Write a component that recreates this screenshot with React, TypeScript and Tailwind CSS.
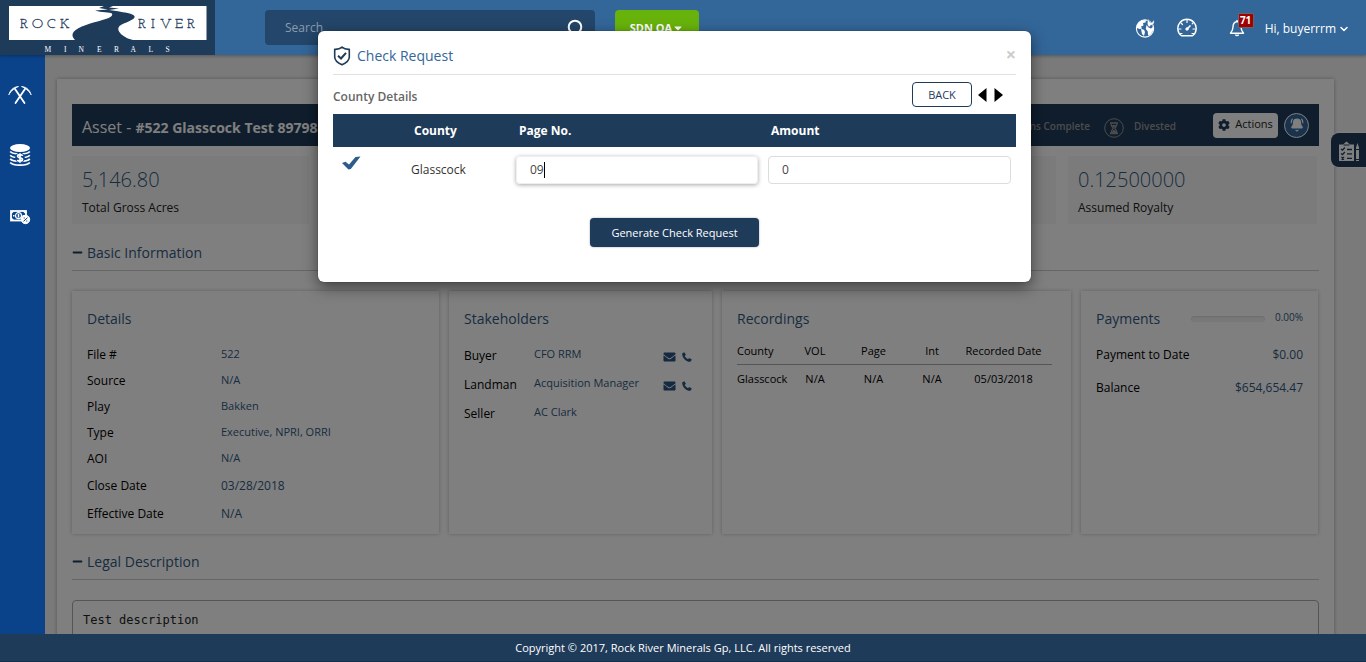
import { FaCaretDown, FaCog, FaEnvelope, FaMinus, FaPhoneAlt } from 'react-icons/fa';
import { BellRing, ChevronDown } from 'lucide-react';

function Logo() {
  return (
    <svg viewBox="0 0 215 55" className="h-[55px] w-[215px] shrink-0" role="img" aria-label="Rock River Minerals">
      <rect width="215" height="55" fill="#1f3b5a" />
      <rect x="9" y="6" width="197.500" height="34" fill="#fff" />
      <path d="M75 40C69 34 74 29 86 25C97 21 110 19 112 15.500C114 12 107 13 100 11.800L95 10.500L108 9.500L99 8L104 6H113L109 7.500L119 8.500L109 10L118 11.200C124 12.500 132 13 134.500 16C136 20 125 22 119.500 26C115 31 124 38 133 40Z" fill="#1f3b5a" />
      <g fontFamily="'Josefin Slab', 'Liberation Serif', serif" fontSize="14" fill="#1f3b5a" stroke="#1f3b5a" strokeWidth="0.3">
        <text y="27.500" x="20 32 47 60">ROCK</text>
        <text y="27.500" x="138 151 160 175 187">RIVER</text>
      </g>
      <text y="51.500" x="44.500 64 78.500 97 114 130.500 148.500 165.500" fontFamily="'Liberation Serif', serif" fontSize="7.500" fill="#fff">MINERALS</text>
    </svg>
  );
}

function Pickaxes() {
  return (
    <svg viewBox="0 0 24 20" className="h-5 w-6" fill="none" stroke="#fff" strokeLinecap="round">
      <path d="M7 4L16.500 18M17 4L7.500 18" strokeWidth="1.800" />
      <path d="M1 9.500C2 5.500 5 2 10.500 1.500C7.500 3 3.500 5 1 9.500ZM23 9.500C22 5.500 19 2 13.500 1.500C16.500 3 20.500 5 23 9.500Z" fill="#fff" strokeWidth="0.800" />
    </svg>
  );
}

function Coins() {
  return (
    <svg viewBox="0 0 22 24" className="h-6 w-[22px]">
      <ellipse cx="11" cy="5" rx="10" ry="4" fill="#fff" />
      <g fill="none" stroke="#fff" strokeWidth="1.700">
        <path d="M1.200 8.500C4 11.800 18 11.800 20.800 8.500M1.200 12.200C4 15.500 18 15.500 20.800 12.200M1.200 15.900C4 19.200 18 19.200 20.800 15.900M1.200 19.500C4 23 18 23 20.800 19.500" />
      </g>
      <ellipse cx="11" cy="14.800" rx="4.800" ry="5.400" fill="#0b438b" />
      <path d="M13.700 12.800C12.900 11.200 8.700 11.100 8.600 13.100C8.500 15.400 13.700 14.200 13.500 16.700C13.200 18.800 9 18.600 8.300 16.900M11 10.300V19.800" fill="none" stroke="#fff" strokeWidth="1.700" />
    </svg>
  );
}

function Banknote() {
  return (
    <svg viewBox="0 0 22 16" className="h-4 w-[22px]" fill="none" stroke="#fff">
      <rect x="2" y="2" width="15" height="9.500" strokeWidth="1.800" />
      <path d="M2 4.500L4.500 2M14.500 2L17 4.500M2 9L4.500 11.500" strokeWidth="1.500" />
      <circle cx="9.500" cy="6.700" r="3" strokeWidth="1.200" />
      <path d="M9.500 5V8.500M4 6.700H5.500M13.500 6.700H15" strokeWidth="1.500" />
      <circle cx="16.500" cy="10.500" r="4.200" fill="#fff" />
      <path d="M14.500 12.300L18.500 8.700M14.700 9H15.800M17.200 12H18.300" stroke="#0b438b" strokeWidth="1" />
    </svg>
  );
}

function Globe() {
  return (
    <svg viewBox="0 0 20 20" className="size-5" fill="none">
      <circle cx="10" cy="10.500" r="8.600" stroke="#fff" strokeWidth="1.100" />
      <path d="M1.800 7.500C3.500 3.500 7 1.800 11 2.300L10.500 4.500L8 5L8.500 7.500L6 8.500L7 10.500L4.500 11L2 10ZM6 11L9 11.800L10 14L9 18L7 16ZM11.500 7L13.500 9.500L16 10.500L18.500 8.500L18.500 12L15.500 16.500L13 17.500L12.800 13.500L10.800 11Z" fill="#fff" />
      <path d="M13.800 0.800L14.500 3.800L17 4.500L18.800 1.800C20 5 18.500 7.500 15.800 7.200L14.500 9C12 8.500 11.500 3.500 13.800 0.800Z" fill="#fff" stroke="#336699" strokeWidth="0.500" />
    </svg>
  );
}

function Gauge() {
  return (
    <svg viewBox="0 0 20 20" className="size-5" fill="none" stroke="#fff" strokeLinecap="round">
      <path d="M4.500 17.800A9.200 9.200 0 1 1 15.500 17.800Z" strokeWidth="1.400" strokeLinejoin="round" />
      <path d="M10 2V4.500M1.500 11H4M16 11H18.500M4 5L5.500 6.500M16 5L15.200 5.800M3.500 15.500H5M15 15.500H16.500" strokeWidth="1.200" />
      <path d="M13 8L10 11" strokeWidth="1.700" />
      <circle cx="10" cy="11" r="1.200" fill="#fff" />
    </svg>
  );
}

function Bell() {
  return (
    <svg viewBox="0 0 16 18" className="h-[18px] w-4" fill="none" stroke="#fff" strokeWidth="1.400" strokeLinejoin="round">
      <path d="M8 2.500C5.200 3 4 5.200 4 8C4 11 3 12.200 1.500 14.200H14.500C13 12.200 12 11 12 8C12 5.200 10.800 3 8 2.500Z" />
      <path d="M8 1V2.500M6.500 15.500C7 17 9 17 9.500 15.500" />
    </svg>
  );
}

function Shield() {
  return (
    <svg viewBox="0 0 18 20" className="h-5 w-[18px]" fill="none" stroke="#1f3b5a">
      <path d="M9 1.200C7 3 4 3.500 1.700 3.400V11C1.700 14.500 5 17 9 18.800C13 17 16.300 14.500 16.300 11V3.400C14 3.500 11 3 9 1.200Z" strokeWidth="1.600" strokeLinejoin="round" />
      <path d="M5 9.800L8 12.500L13 6.800" strokeWidth="2" />
    </svg>
  );
}

function Tick() {
  return (
    <svg viewBox="0 0 20 14" className="mt-[9px] h-[14px] w-5" role="img" aria-label="Selected">
      <path d="M1 7L4.500 5.800L8 8.500L14.500 1L19.500 0.500L9.800 13L7.500 13.500Z" fill="#2b5c8c" />
    </svg>
  );
}

function Hourglass() {
  return (
    <svg viewBox="0 0 20 20" className="size-5" fill="none" stroke="#999">
      <circle cx="10" cy="10" r="9.300" strokeWidth="1" />
      <path d="M6 5H14M6 15.500H14" strokeWidth="1.600" />
      <path d="M7 5.500C7 8 8.500 9 9.200 10.200C8.500 11.500 7 12.500 7 15H13C13 12.500 11.500 11.500 10.800 10.200C11.500 9 13 8 13 5.500" strokeWidth="1.200" />
      <path d="M8 14.500L10 12L12 14.500ZM8.500 7.500H11.500L10 9.500Z" fill="#999" />
    </svg>
  );
}

function Checklist() {
  return (
    <svg viewBox="0 0 22 22" className="size-[22px]">
      <path d="M1 4.500H5L8.500 1.500L12 4.500H16V21H1Z" fill="#fff" />
      <path d="M5.500 5H11.500" stroke="#1f3b5a" />
      <path d="M3 9L4.500 10.200L6.800 7.500M3 13.500L4.500 14.700L6.800 12M3.500 17L6 19.500M6 17L3.500 19.500M9 9.500H14M9 13.800H14M9 18.300H14" fill="none" stroke="#1f3b5a" strokeWidth="1.300" />
      <path d="M19.500 3L21 7.500V9H18V7.500ZM18 10H21V19H18ZM18 20H21V21H18Z" fill="#fff" />
    </svg>
  );
}

const details = [
  ['File #', '522'],
  ['Source', 'N/A'],
  ['Play', 'Bakken'],
  ['Type', 'Executive, NPRI, ORRI'],
  ['AOI', 'N/A'],
];
const dates = [
  ['Close Date', '03/28/2018'],
  ['Effective Date', 'N/A'],
];
const stakeholders = [
  { role: 'Buyer', name: 'CFO RRM', contact: true },
  { role: 'Landman', name: 'Acquisition Manager', contact: true },
  { role: 'Seller', name: 'AC Clark', contact: false },
];

const panel = 'h-[243px] bg-white px-[15px] pt-[17px] shadow-[0_0_4px_rgba(0,0,0,0.25)]';
const panelTitle = 'text-[14px] leading-[22px] text-[#31597f]';

function Header() {
  return (
    <header className="relative z-20 flex h-[55px] shrink-0 items-center bg-[#336699] shadow-[0_1px_3px_rgba(0,0,0,0.3)]">
      <Logo />
      <div className="ml-[50px] flex h-[35px] w-[330px] items-center rounded bg-[#24466a] pr-3">
        <input type="search" aria-label="Search" placeholder="Search" className="min-w-0 flex-1 bg-transparent pl-5 text-[12px] text-white outline-none placeholder:text-[#8c9cae]" />
        <button type="button" aria-label="Submit search">
          <svg viewBox="0 0 16 18" className="h-[18px] w-4" fill="none" stroke="#fff" strokeWidth="2">
            <circle cx="8" cy="8" r="6.300" />
            <path d="M11 13L13 17" />
          </svg>
        </button>
      </div>
      <button type="button" className="ml-5 flex h-[35px] w-[84px] items-center justify-center rounded bg-[#68b30b] pt-px text-[11px] font-bold text-white">
        SDN QA <FaCaretDown className="size-3" />
      </button>
      <nav className="ml-auto flex items-center pr-4">
        <a href="#map" aria-label="Map"><Globe /></a>
        <a href="#dashboard" aria-label="Dashboard" className="ml-[22px]"><Gauge /></a>
        <a href="#notifications" aria-label="71 notifications" className="relative ml-8">
          <Bell />
          <span className="absolute -top-[6px] left-[9px] h-[15px] w-4 border border-[#666] bg-[#a00000] text-center text-[10px] leading-[13px] font-bold text-white">71</span>
        </a>
        <button type="button" className="ml-5 flex items-center pt-[2px] text-[12px] leading-4 text-white">
          Hi, buyerrrm <ChevronDown className="ml-[2px] size-3" strokeWidth={3} />
        </button>
      </nav>
    </header>
  );
}

function Section({ title }: { title: string }) {
  return (
    <h2 className="flex h-[35px] items-center gap-1 border-b border-[#ccc] pb-px text-[14px] text-[#31597f]">
      <FaMinus className="size-[11px] text-[#1f3b5a]" />
      {title}
    </h2>
  );
}

function Details() {
  return (
    <section className={panel}>
      <h3 className={panelTitle}>Details</h3>
      <dl className="mt-3 text-[12px] text-black">
        {details.map(([label, value]) => (
          <div key={label} className="flex h-[26px] items-center">
            <dt className="w-[134px]">{label}</dt>
            <dd className="pb-[2px] text-[11px] text-[#31597f]">{value}</dd>
          </div>
        ))}
        {dates.map(([label, value]) => (
          <div key={label} className="flex h-7 items-center">
            <dt className="w-[134px]">{label}</dt>
            <dd className="text-[#31597f]">{value}</dd>
          </div>
        ))}
      </dl>
    </section>
  );
}

function Stakeholders() {
  return (
    <section className={panel}>
      <h3 className={panelTitle}>Stakeholders</h3>
      <ul className="mt-[11px]">
        {stakeholders.map((s) => (
          <li key={s.role} className="flex h-[29px] items-center text-[12px] text-black">
            <span className="w-[70px]">{s.role}</span>
            <a href="#contact" className="pb-[2px] text-[11px] text-[#31597f]">{s.name}</a>
            {s.contact && (
              <span className="mt-[2px] mr-[5px] ml-auto flex gap-[6px] text-[#2b5480]">
                <a href="#email" aria-label={`Email ${s.name}`}><FaEnvelope className="h-3 w-[13px]" /></a>
                <a href="#call" aria-label={`Call ${s.name}`}>
                  <svg viewBox="0 0 10 10" className="mt-px size-[10px]" fill="currentColor">
                    <path d="M0.300 1.300L2.300 0.200L3.900 2.700L2.700 4C3.400 5.400 4.500 6.500 6 7.200L7.200 6.100L9.800 7.500L8.800 9.600C5 10.500 -0.500 5.500 0.300 1.300Z" />
                  </svg>
                </a>
              </span>
            )}
          </li>
        ))}
      </ul>
    </section>
  );
}

function Recordings() {
  return (
    <section className={panel}>
      <h3 className={panelTitle}>Recordings</h3>
      <table className="mt-2 w-[315px] text-[11px] text-black">
        <thead>
          <tr className="h-[26px] border-b border-[#aaa]">
            <th className="w-[55px] text-left font-normal">County</th>
            <th className="w-[46px] font-normal">VOL</th>
            <th className="w-[71px] font-normal">Page</th>
            <th className="w-[46px] font-normal">Int</th>
            <th className="font-normal">Recorded Date</th>
          </tr>
        </thead>
        <tbody>
          <tr className="h-[29px] text-center">
            <td className="text-left">Glasscock</td>
            <td>N/A</td>
            <td>N/A</td>
            <td>N/A</td>
            <td>05/03/2018</td>
          </tr>
        </tbody>
      </table>
    </section>
  );
}

function Payments() {
  return (
    <section className={panel}>
      <div className="flex items-center">
        <h3 className={panelTitle}>Payments</h3>
        <div role="progressbar" aria-label="Payments made" aria-valuenow={0} className="mr-[10px] ml-auto h-[6px] w-[74px] rounded-full bg-[#f1f1f1] shadow-[inset_0_1px_2px_rgba(0,0,0,0.1)]" />
        <span className="pb-1 text-[10px] text-[#31597f]">0.00%</span>
      </div>
      <dl className="mt-2 text-[12px] text-black">
        <div className="flex h-[33px] items-center justify-between">
          <dt>Payment to Date</dt>
          <dd className="text-[#31597f]">$0.00</dd>
        </div>
        <div className="flex h-[33px] items-center justify-between">
          <dt>Balance</dt>
          <dd className="text-[#31597f]">$654,654.47</dd>
        </div>
      </dl>
    </section>
  );
}

function Stat({ value, label }: { value: string; label: string }) {
  return (
    <div className="mr-3 h-[68px] bg-[#f7f7f7] px-[10px] pt-[9px] last:mr-0">
      <p className="text-[20px] leading-[30px] font-light text-[#31597f]">{value}</p>
      <p className="mt-[3px] text-[12px] leading-5 text-[#222]">{label}</p>
    </div>
  );
}

function AssetPage() {
  return (
    <main className="relative flex-1 overflow-hidden bg-[#f5f5f5] pt-6 pr-8 pl-3">
      <article className="min-h-full bg-white px-[15px] pt-[25px] shadow-[0_0_4px_rgba(0,0,0,0.3)]">
        <div className="flex h-[42px] items-center bg-[#1f3b5a] px-[10px] text-white">
          <h1 className="pt-1 text-[16px] whitespace-nowrap">Asset - <b className="text-[14px] font-bold">#522 Glasscock Test 897988</b></h1>
          <div className="ml-auto flex items-center text-[10px] font-semibold text-[#999]">
            <span className="pt-[3px]">Liens Complete</span>
            <span className="mt-[6px] mr-[10px] ml-[14px]"><Hourglass /></span>
            <span className="pt-[3px]">Divested</span>
          </div>
          <button type="button" className="ml-[37px] flex h-[25px] w-[65px] items-center justify-center gap-[5px] rounded bg-white pb-px text-[11px] text-[#222]">
            <FaCog className="size-3 text-[#1f3b5a]" /> Actions
          </button>
          <button type="button" aria-label="Reminders" className="ml-[6px] flex size-[25px] items-center justify-center rounded-full border border-white bg-[#336699] text-white">
            <BellRing className="size-[14px]" fill="currentColor" />
          </button>
        </div>
        <div className="mt-[10px] mr-[2px] grid grid-cols-5">
          <Stat value="5,146.80" label="Total Gross Acres" />
          <Stat value="643.35" label="Net Acres" />
          <Stat value="5,146.80" label="Royalty Acres" />
          <Stat value="$654,654" label="Total Value" />
          <Stat value="0.12500000" label="Assumed Royalty" />
        </div>
        <div className="mt-3"><Section title="Basic Information" /></div>
        <div className="mt-5 mr-px grid grid-cols-[367fr_263fr_349fr_237fr] gap-[10px]">
          <Details />
          <Stakeholders />
          <Recordings />
          <Payments />
        </div>
        <div className="mt-[11px]"><Section title="Legal Description" /></div>
        <textarea aria-label="Legal Description" readOnly defaultValue="Test description" className="mt-5 block h-20 w-full resize-none rounded border border-[#aaa] px-[10px] py-[9px] font-['DejaVu_Sans_Mono',monospace] text-[12px] leading-5 text-[#222]" />
      </article>
      <button type="button" aria-label="Open checklist" className="absolute top-[78px] right-0 flex h-[34px] w-[35px] items-center justify-center rounded-l-lg bg-[#1f3b5a] pt-[2px] shadow-[0_0_0_1px_#fff]">
        <Checklist />
      </button>
      <div className="absolute inset-0 bg-black/50" />
    </main>
  );
}

function CheckRequestDialog() {
  const field = 'h-7 w-full rounded border px-[13px] text-[12px] text-[#444] outline-none';
  return (
    <div className="absolute inset-0 z-30 flex items-start justify-center pt-[31px] pr-[17px]">
      <div role="dialog" aria-labelledby="dialog-title" className="h-[251px] w-[713px] rounded-md bg-white px-[15px] shadow-[0_5px_15px_rgba(0,0,0,0.5),0_0_1px_rgba(0,0,0,0.8)]">
        <div className="flex h-11 items-center border-b border-[#e0e0e0] pt-[6px]">
          <Shield />
          <h2 id="dialog-title" className="ml-[6px] text-[14px] text-[#336699]">Check Request</h2>
          <button type="button" aria-label="Close" className="ml-auto pb-1 text-[18px] leading-5 font-bold text-[#ccc]">×</button>
        </div>
        <div className="flex h-[39px] items-center pr-[13px]">
          <h3 className="pt-1 text-[12px] font-semibold text-[#666]">County Details</h3>
          <button type="button" className="ml-auto h-[25px] w-[60px] rounded border border-[#1f3b5a] pt-px text-[11px] text-[#1f3b5a]">BACK</button>
          <button type="button" aria-label="Previous" className="ml-[6px]">
            <svg viewBox="0 0 9 14" className="h-[14px] w-[9px]"><path d="M8.500 0V14L0 7Z" /></svg>
          </button>
          <button type="button" aria-label="Next" className="ml-[7px]">
            <svg viewBox="0 0 9 14" className="h-[14px] w-[9px]"><path d="M0.500 0V14L9 7Z" /></svg>
          </button>
        </div>
        <table className="w-full table-fixed text-left text-[12px]">
          <thead>
            <tr className="h-[33px] bg-[#1f3b5a] text-white">
              <th className="w-[70px]"><span className="sr-only">Selected</span></th>
              <th className="w-[108px] px-[11px]">County</th>
              <th className="w-[252px] px-2">Page No.</th>
              <th className="px-2">Amount</th>
            </tr>
          </thead>
          <tbody>
            <tr className="h-[45px] text-[#333]">
              <td className="px-2 align-top"><Tick /></td>
              <td className="px-2">Glasscock</td>
              <td className="px-[5px]">
                <span className="relative block">
                  <input aria-label="Page No." defaultValue="09" className={`${field} border-[#eee] shadow-[0_1px_4px_rgba(0,0,0,0.35)]`} />
                  <span className="absolute top-[6px] left-[28px] h-4 w-px bg-black" />
                </span>
              </td>
              <td className="px-[5px]"><input aria-label="Amount" defaultValue="0" className={`${field} border-[#ddd]`} /></td>
            </tr>
          </tbody>
        </table>
        <div className="mt-[26px] flex justify-center">
          <button type="button" className="h-[29px] w-[169px] rounded bg-[#1f3b5a] pt-px text-[11px] font-medium text-white shadow-[0_0_2px_rgba(0,0,0,0.4)]">Generate Check Request</button>
        </div>
      </div>
    </div>
  );
}

export default function App() {
  return (
    <div className="relative flex h-screen flex-col overflow-hidden font-['Open_Sans',sans-serif]">
      <Header />
      <div className="flex min-h-0 flex-1">
        <nav className="flex w-[45px] shrink-0 flex-col items-center bg-[#0b438b] pt-[30px] pr-[5px]">
          <a href="#assets" aria-label="Assets"><Pickaxes /></a>
          <a href="#funds" aria-label="Funds" className="mt-[38px]"><Coins /></a>
          <a href="#payments" aria-label="Payments" className="mt-[42px]"><Banknote /></a>
        </nav>
        <AssetPage />
      </div>
      <footer className="z-20 flex h-7 shrink-0 items-center justify-center border-b border-[#16304c] bg-[#1f3b5a] pt-px text-[11px] text-white">
        Copyright © 2017, Rock River Minerals Gp, LLC. All rights reserved
      </footer>
      <CheckRequestDialog />
    </div>
  );
}
